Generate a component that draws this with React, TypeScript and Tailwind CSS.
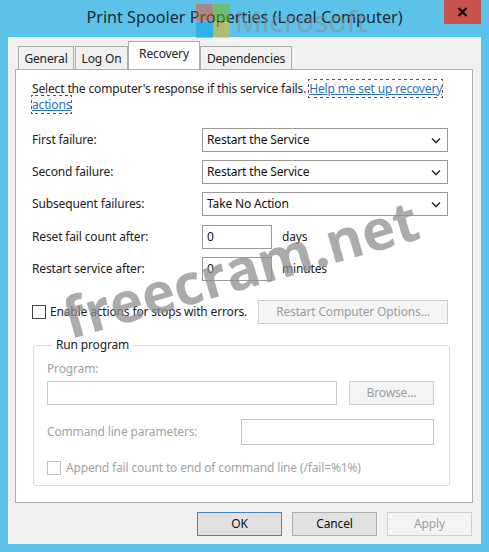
import React from "react";

const font = { fontFamily: '"Noto Sans", "Open Sans", sans-serif', letterSpacing: "-0.15px" };

function Chevron() {
  return (
    <svg width="10" height="7" viewBox="0 0 10 7" className="shrink-0">
      <path d="M1 1.5 L5 5.5 L9 1.5" fill="none" stroke="#333" strokeWidth="1.6" />
    </svg>
  );
}

function Select({ value }: { value: string }) {
  return (
    <div className="w-[246px] h-[24px] border border-[#9a9a9a] bg-white flex items-center justify-between pl-[4px] pr-[6px] text-[#111]">
      <span>{value}</span>
      <Chevron />
    </div>
  );
}

function Row({ label, children }: { label: string; children: React.ReactNode }) {
  return (
    <div className="flex items-center h-[24px]">
      <div className="w-[170px] text-[#222]">{label}</div>
      {children}
    </div>
  );
}

function Box({ w, h = 24, value, disabled }: { w: number; h?: number; value?: string; disabled?: boolean }) {
  return (
    <div
      className={`border ${disabled ? "border-[#c8c8c8]" : "border-[#9a9a9a]"} bg-white flex items-center pl-[4px] text-[#111]`}
      style={{ width: w, height: h }}
    >
      {value}
    </div>
  );
}

function CheckBox({ disabled }: { disabled?: boolean }) {
  return (
    <div className={`w-[14px] h-[14px] border ${disabled ? "border-[#c0c0c0]" : "border-[#444]"} bg-white shrink-0`} />
  );
}

export default function App() {
  return (
    <div className="w-[489px] h-[552px] bg-[#5cc2ea] flex flex-col px-[8px] pb-[8px] text-[12px] relative overflow-hidden" style={font}>
      {/* title bar */}
      <div className="h-[37px] relative flex items-center justify-center">
        <span className="text-[16.2px] text-[#1c2a33] mt-[-2px] tracking-normal">Print Spooler Properties (Local Computer)</span>
        <div className="absolute top-0 right-0 w-[37px] h-[24px] bg-[#c7524c] flex items-center justify-center">
          <svg width="11" height="10" viewBox="0 0 11 10">
            <path d="M1.5 1 L9.5 9 M9.5 1 L1.5 9" stroke="#111" strokeWidth="2.4" />
          </svg>
        </div>
      </div>

      {/* client */}
      <div className="flex-1 bg-[#f0f0f0] flex flex-col pl-[7px] pr-[8px]">
        {/* tabs */}
        <div className="flex items-end h-[32px] pl-[3px]">
          <div className="h-[24px] w-[56px] border border-[#acacac] border-b-0 bg-[#f0f0f0] flex items-center justify-center text-[#222] mb-[-1px]">General</div>
          <div className="h-[24px] w-[53px] border border-[#acacac] border-b-0 bg-[#f0f0f0] flex items-center justify-center text-[#222] ml-[1px] mb-[-1px]">Log On</div>
          <div className="h-[28px] w-[72px] border border-[#acacac] border-b-0 bg-white flex items-center justify-center text-[#222] relative z-10 pb-[3px]">Recovery</div>
          <div className="h-[24px] w-[92px] border border-[#acacac] border-b-0 bg-[#f0f0f0] flex items-center justify-center text-[#222] mb-[-1px]">Dependencies</div>
        </div>

        {/* panel */}
        <div className="h-[434px] bg-white border border-[#adadad] flex flex-col pl-[16px] pr-[24px] pt-[11px]">
          <p className="leading-[16px] text-[#222] w-[418px]">
            Select the computer's response if this service fails.{" "}
            <span className="text-[#2a6fbd] underline outline outline-1 outline-dotted outline-[#555]">Help me set up recovery actions</span>
          </p>

          <div className="flex flex-col gap-[8px] mt-[15px]">
            <Row label="First failure:"><Select value="Restart the Service" /></Row>
            <Row label="Second failure:"><Select value="Restart the Service" /></Row>
            <Row label="Subsequent failures:"><Select value="Take No Action" /></Row>
          </div>

          <div className="flex flex-col gap-[8px] mt-[9px]">
            <Row label="Reset fail count after:">
              <Box w={70} value="0" />
              <span className="ml-[10px] text-[#222]">days</span>
            </Row>
            <Row label="Restart service after:">
              <Box w={70} value="0" />
              <span className="ml-[10px] text-[#222]">minutes</span>
            </Row>
          </div>

          <div className="flex items-center justify-between mt-[19px] h-[24px]">
            <div className="flex items-center gap-[4px]">
              <CheckBox />
              <span className="text-[#222]">Enable actions for stops with errors.</span>
            </div>
            <div className="w-[190px] h-[24px] border border-[#cfcfcf] bg-[#f4f4f4] flex items-center justify-center text-[#9d9d9d]">
              Restart Computer Options...
            </div>
          </div>

          <fieldset className="mt-[13px] ml-[1px] w-[417px] h-[149px] border border-[#dcdcdc] rounded-[3px] pl-[13px] pr-[15px] pt-0 m-0">
            <legend className="ml-[5px] px-[4px] text-[#222] leading-[16px]">Run program</legend>
            <div className="text-[#a3a3a3] mt-[8px] leading-[16px]">Program:</div>
            <div className="flex items-center justify-between mt-[4px]">
              <Box w={290} disabled />
              <div className="w-[85px] h-[24px] border border-[#cfcfcf] bg-[#f4f4f4] flex items-center justify-center text-[#9d9d9d]">Browse...</div>
            </div>
            <div className="flex items-center justify-between mt-[14px]">
              <span className="text-[#a3a3a3]">Command line parameters:</span>
              <Box w={193} h={26} disabled />
            </div>
            <div className="flex items-center gap-[5px] mt-[14px]">
              <CheckBox disabled />
              <span className="text-[#a3a3a3]">Append fail count to end of command line (/fail=%1%)</span>
            </div>
          </fieldset>
        </div>

        {/* buttons */}
        <div className="flex justify-end gap-[10px] mt-[9px] pr-[1px]">
          <div className="w-[85px] h-[24px] border border-[#3e86c4] bg-[#e1e1e1] flex items-center justify-center text-[#111]">OK</div>
          <div className="w-[85px] h-[24px] border border-[#adadad] bg-[#e1e1e1] flex items-center justify-center text-[#111]">Cancel</div>
          <div className="w-[85px] h-[24px] border border-[#cfcfcf] bg-[#f4f4f4] flex items-center justify-center text-[#9d9d9d]">Apply</div>
        </div>
      </div>

      {/* watermarks */}
      <div className="absolute left-[196px] top-[4px] flex items-center gap-[5px] opacity-50 pointer-events-none">
        <div className="grid grid-cols-2 gap-[1px] w-[34px] h-[34px]">
          <div className="bg-[#f25022]" />
          <div className="bg-[#7fba00]" />
          <div className="bg-[#00a4ef]" />
          <div className="bg-[#ffb900]" />
        </div>
        <span className="text-[30px] text-[#8a8a8a] leading-none tracking-normal" style={{ fontFamily: '"Open Sans", sans-serif' }}>Microsoft</span>
      </div>
      <div
        className="absolute left-[64px] top-[290px] text-[56px] font-bold text-[#8f8f8f] opacity-75 leading-none pointer-events-none -rotate-[16deg] origin-left tracking-normal"
        style={{ fontFamily: '"Open Sans", sans-serif' }}
      >
        freecram.net
      </div>
    </div>
  );
}
